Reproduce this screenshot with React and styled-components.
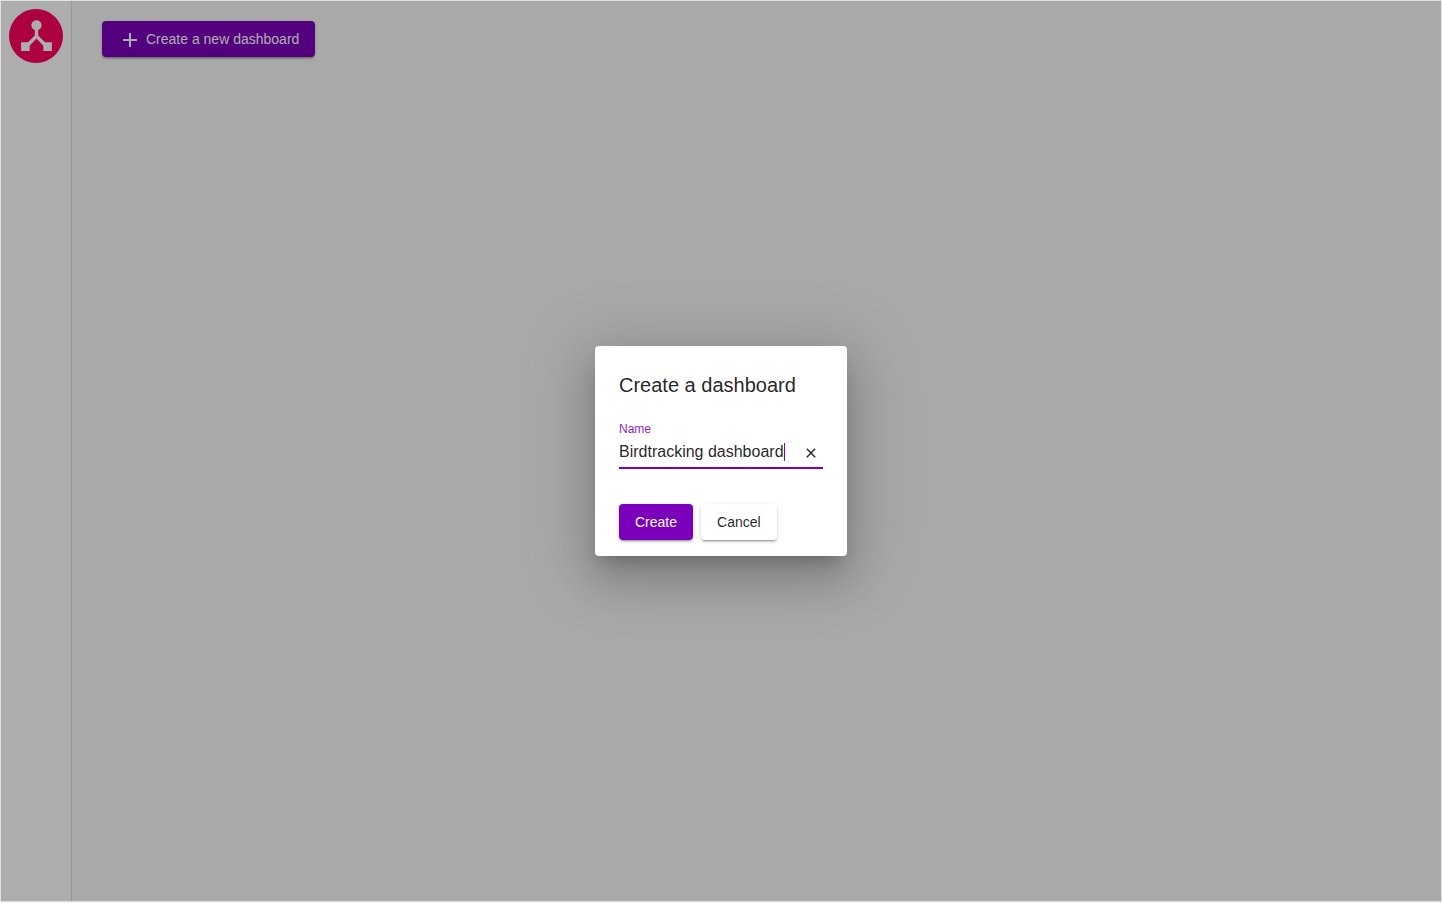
import React, { useState } from "react";
import styled, { createGlobalStyle, css } from "styled-components";

const GlobalStyle = createGlobalStyle`
  *, *::before, *::after { box-sizing: border-box; }
  body {
    margin: 0;
    background: #f0f0f0;
    color: rgba(0, 0, 0, 0.87);
    font-family: "Liberation Sans", Arial, sans-serif;
  }
`;

const Shell = styled.div`
  position: relative;
  display: flex;
  min-height: calc(100vh - 1px);
  border: 1px solid #e0e0e0;
  background: #fafafa;
`;

const Sidebar = styled.nav`
  flex: none;
  width: 71px;
  padding: 8px;
  background: #ffffff;
  border-right: 1px solid #e0e0e0;
`;

const Logo = styled.a`
  display: flex;
  align-items: center;
  justify-content: center;
  width: 54px;
  height: 54px;
  padding-bottom: 1px;
  border-radius: 50%;
  background: #ff0061;
  color: #ffffff;
`;

const Main = styled.main`
  flex: 1;
  padding: 20px 30px;
`;

const Button = styled.button`
  display: inline-flex;
  align-items: center;
  gap: 4px;
  height: 36px;
  padding: 0 16px;
  border: 0;
  border-radius: 4px;
  font: 14px/36px "Liberation Sans", Arial, sans-serif;
  white-space: nowrap;
  cursor: pointer;
  background: #ffffff;
  color: rgba(0, 0, 0, 0.87);
  box-shadow: 0 3px 1px -2px rgba(0, 0, 0, 0.2), 0 2px 2px 0 rgba(0, 0, 0, 0.14),
    0 1px 5px 0 rgba(0, 0, 0, 0.12);
  ${(p) =>
    p.$primary &&
    css`
      background: #7b00bb;
      color: #ffffff;
    `}
`;

const Glyph = styled.span`
  display: flex;
  padding-top: 2px;
`;

const Backdrop = styled.div`
  position: absolute;
  inset: 0;
  display: flex;
  align-items: center;
  justify-content: center;
  overflow: hidden;
  background: rgba(0, 0, 0, 0.32);
`;

const Dialog = styled.form`
  width: 252px;
  padding: 24px 24px 16px;
  border-radius: 4px;
  background: #ffffff;
  box-shadow: 0 11px 15px -7px rgba(0, 0, 0, 0.2), 0 24px 38px 3px rgba(0, 0, 0, 0.14),
    0 9px 64px 16px rgba(0, 0, 0, 0.13);
`;

const Title = styled.h1`
  margin: 0 0 20px;
  font-size: 20px;
  line-height: 30px;
  font-weight: 400;
`;

const Label = styled.label`
  display: block;
  font-size: 12px;
  line-height: 18px;
  color: #7b00bb;
  opacity: 0.87;
`;

const Field = styled.div`
  display: flex;
  align-items: center;
  height: 31px;
  padding-bottom: 1px;
  margin-bottom: 35px;
  border-bottom: 2px solid #7b00bb;
`;

const TextInput = styled.input`
  field-sizing: content;
  min-width: 0;
  max-width: 179px;
  height: 24px;
  padding: 0;
  border: 0;
  outline: 0;
  background: transparent;
  color: inherit;
  caret-color: transparent;
  font: 16px/24px "Liberation Sans", Arial, sans-serif;
`;

const Caret = styled.span`
  flex: none;
  width: 1px;
  height: 18px;
  background: #7b00bb;
`;

const ClearButton = styled.button`
  display: flex;
  flex: none;
  align-items: center;
  justify-content: center;
  width: 24px;
  height: 24px;
  margin-left: auto;
  padding: 0;
  border: 0;
  background: transparent;
  color: inherit;
  cursor: pointer;
`;

const Actions = styled.div`
  display: flex;
  gap: 8px;
`;

const Icon = ({ size, d }) => (
  <svg width={size} height={size} viewBox="0 0 24 24" fill="currentColor" aria-hidden="true">
    <path d={d} />
  </svg>
);

const HUB =
  "M17 16l-4-4V8.82C14.16 8.4 15 7.3 15 6c0-1.66-1.34-3-3-3S9 4.34 9 6c0 1.3.84 2.4 2 2.82V12l-4 4H3v5h5v-3.05l4-4.2 4 4.2V21h5v-5h-4z";
const PLUS = "M19 13h-6v6h-2v-6H5v-2h6V5h2v6h6v2z";
const CLOSE =
  "M19 6.41L17.59 5 12 10.59 6.41 5 5 6.41 10.59 12 5 17.59 6.41 19 12 13.41 17.59 19 19 17.59 13.41 12z";

export default function App() {
  const [name, setName] = useState("Birdtracking dashboard");

  return (
    <>
      <GlobalStyle />
      <Shell>
        <Sidebar>
          <Logo href="#" aria-label="Home">
            <Icon size={41} d={HUB} />
          </Logo>
        </Sidebar>
        <Main>
          <Button type="button" $primary>
            <Glyph>
              <Icon size={24} d={PLUS} />
            </Glyph>
            Create a new dashboard
          </Button>
        </Main>
        <Backdrop>
          <Dialog role="dialog" aria-labelledby="dialog-title" onSubmit={(e) => e.preventDefault()}>
            <Title id="dialog-title">Create a dashboard</Title>
            <Label htmlFor="dashboard-name">Name</Label>
            <Field>
              <TextInput
                id="dashboard-name"
                type="text"
                value={name}
                onChange={(e) => setName(e.target.value)}
              />
              <Caret />
              <ClearButton type="button" aria-label="Clear" onClick={() => setName("")}>
                <Glyph>
                  <Icon size={16} d={CLOSE} />
                </Glyph>
              </ClearButton>
            </Field>
            <Actions>
              <Button type="submit" $primary>
                Create
              </Button>
              <Button type="button">Cancel</Button>
            </Actions>
          </Dialog>
        </Backdrop>
      </Shell>
    </>
  );
}
